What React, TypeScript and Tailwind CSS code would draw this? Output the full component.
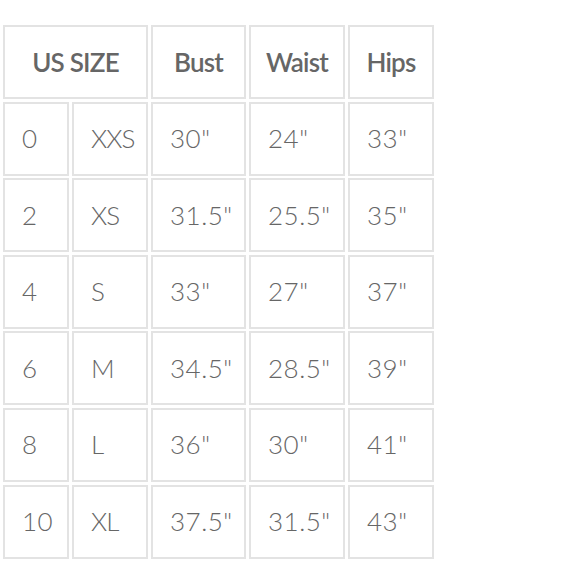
import React from "react";

const rows = [
  ["0", "XXS", "30\"", "24\"", "33\""],
  ["2", "XS", "31.5\"", "25.5\"", "35\""],
  ["4", "S", "33\"", "27\"", "37\""],
  ["6", "M", "34.5\"", "28.5\"", "39\""],
  ["8", "L", "36\"", "30\"", "41\""],
  ["10", "XL", "37.5\"", "31.5\"", "43\""],
];

const cell = "border-2 border-[#e3e3e3] flex items-center text-[#666666]";
const head = `${cell} justify-center text-[26px] font-semibold tracking-[-0.8px]`;

export default function App() {
  return (
    <div className="w-[580px] h-[580px] bg-white pt-[25px] pl-[3px]" style={{ fontFamily: "Lato, 'Open Sans', sans-serif" }}>
      <div className="grid grid-cols-[66px_76px_95px_96px_86px] auto-rows-[74px] gap-x-[3px] gap-y-[2.6px] w-max">
        <div className={`${head} col-span-2`}>US SIZE</div>
        <div className={head}>Bust</div>
        <div className={head}>Waist</div>
        <div className={head}>Hips</div>
        {rows.map((r, i) =>
          r.map((v, j) => (
            <div
              key={`${i}-${j}`}
              className={`${cell} pl-[17px] text-[26px] font-light ${j === 1 ? "tracking-[-1px]" : "tracking-[0.5px]"}`}
            >
              {v}
            </div>
          ))
        )}
      </div>
    </div>
  );
}
